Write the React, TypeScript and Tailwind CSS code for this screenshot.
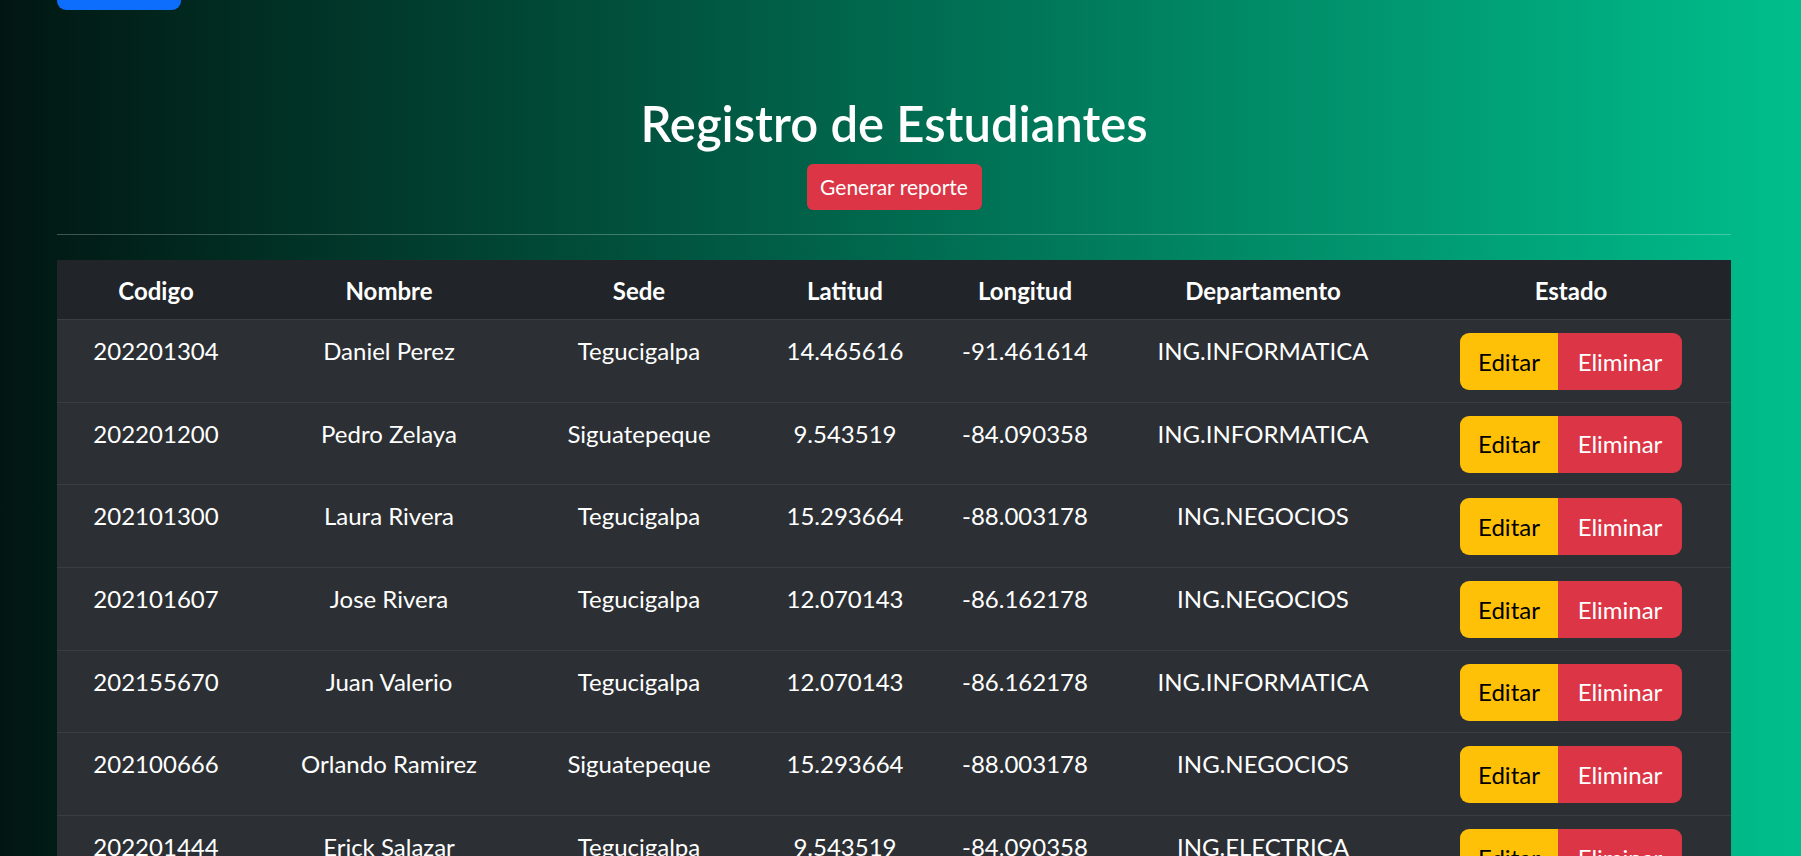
import React from 'react';

type Estudiante = {
  codigo: string;
  nombre: string;
  sede: string;
  latitud: string;
  longitud: string;
  departamento: string;
};

const estudiantes: Estudiante[] = [
  { codigo: '202201304', nombre: 'Daniel Perez', sede: 'Tegucigalpa', latitud: '14.465616', longitud: '-91.461614', departamento: 'ING.INFORMATICA' },
  { codigo: '202201200', nombre: 'Pedro Zelaya', sede: 'Siguatepeque', latitud: '9.543519', longitud: '-84.090358', departamento: 'ING.INFORMATICA' },
  { codigo: '202101300', nombre: 'Laura Rivera', sede: 'Tegucigalpa', latitud: '15.293664', longitud: '-88.003178', departamento: 'ING.NEGOCIOS' },
  { codigo: '202101607', nombre: 'Jose Rivera', sede: 'Tegucigalpa', latitud: '12.070143', longitud: '-86.162178', departamento: 'ING.NEGOCIOS' },
  { codigo: '202155670', nombre: 'Juan Valerio', sede: 'Tegucigalpa', latitud: '12.070143', longitud: '-86.162178', departamento: 'ING.INFORMATICA' },
  { codigo: '202100666', nombre: 'Orlando Ramirez', sede: 'Siguatepeque', latitud: '15.293664', longitud: '-88.003178', departamento: 'ING.NEGOCIOS' },
  { codigo: '202201444', nombre: 'Erick Salazar', sede: 'Tegucigalpa', latitud: '9.543519', longitud: '-84.090358', departamento: 'ING.ELECTRICA' },
];

const columnas = ['Codigo', 'Nombre', 'Sede', 'Latitud', 'Longitud', 'Departamento', 'Estado'];

// same column template for header and body rows
const gridCols = 'grid grid-cols-[198px_268px_232px_180px_180px_296px_320px]';

const FilaEstudiante = ({ est }: { est: Estudiante }) => (
  <div className={`${gridCols} h-[82.7px] pt-[13px] bg-[#2c3034] border-b border-[#3a3e42] text-center`}>
    <div>{est.codigo}</div>
    <div>{est.nombre}</div>
    <div>{est.sede}</div>
    <div>{est.latitud}</div>
    <div>{est.longitud}</div>
    <div>{est.departamento}</div>
    <div className="flex justify-center">
      <button className="w-[98px] h-[57px] bg-[#ffc107] text-black rounded-l-[9px]">
        Editar
      </button>
      <button className="w-[124px] h-[57px] bg-[#dc3545] text-white rounded-r-[9px]">
        Eliminar
      </button>
    </div>
  </div>
);

export default function App() {
  return (
    <div className="min-h-screen w-full bg-[linear-gradient(90deg,#011612_0%,#00be8c_100%)] text-white font-['Lato','Liberation_Sans',sans-serif] text-[24px] leading-[36px]">
      <div className="ml-[57px] w-[1674px]">
        <div className="h-[10px] w-[124px] bg-[#0d6efd] rounded-b-[9px]" />

        <h1 className="mt-[83px] text-center text-[49px] leading-[60px] font-semibold">
          Registro de Estudiantes
        </h1>
        <div className="flex justify-center mt-[11px]">
          <button className="w-[175px] h-[46px] bg-[#dc3545] text-white text-[21px] leading-[30px] rounded-[6px]">
            Generar reporte
          </button>
        </div>

        <hr className="mt-[24px] border-0 border-t border-white/25" />

        <div className="mt-[25px]">
          <div className={`${gridCols} h-[60px] pt-[13px] bg-[#212529] border-b border-[#3a3e42] text-center font-bold`}>
            {columnas.map((col) => (
              <div key={col}>{col}</div>
            ))}
          </div>
          {estudiantes.map((est) => (
            <FilaEstudiante key={est.codigo} est={est} />
          ))}
        </div>
      </div>
    </div>
  );
}
